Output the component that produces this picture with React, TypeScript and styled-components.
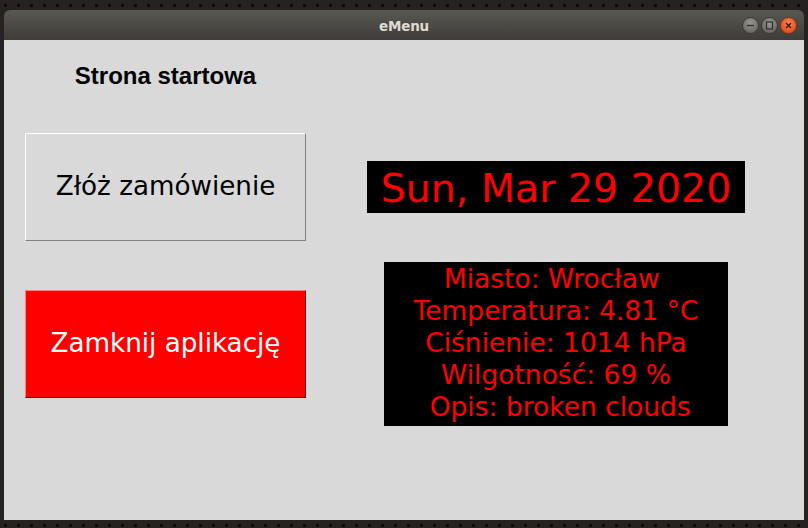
import React from "react";
import styled, { createGlobalStyle } from "styled-components";

const GlobalStyle = createGlobalStyle`
  html, body {
    margin: 0;
    padding: 0;
  }
  body {
    width: 808px;
    height: 528px;
    overflow: hidden;
    background-color: #272222;
    background-image: radial-gradient(circle, #0b0b0b 1.4px, transparent 2px);
    background-size: 13px 13px;
    background-position: -1px -1px;
  }
`;

const Desktop = styled.div`
  padding: 10px 4px 8px 4px;
  display: flex;
`;

const Window = styled.div`
  width: 800px;
  display: flex;
  flex-direction: column;
`;

const TitleBar = styled.div`
  height: 30px;
  border-radius: 6px 6px 0 0;
  background: linear-gradient(#5a5852, #3d3c38);
  display: grid;
  grid-template-columns: 1fr auto 1fr;
  align-items: center;
`;

const Title = styled.div`
  grid-column: 2;
  font-family: "DejaVu Sans", sans-serif;
  font-weight: bold;
  font-size: 13.5px;
  color: #dfdbd2;
  letter-spacing: -0.2px;
  padding-top: 1px;
`;

const Controls = styled.div`
  grid-column: 3;
  justify-self: end;
  display: flex;
  gap: 2px;
  padding-right: 7px;
`;

const CircleButton = styled.div<{ $close?: boolean }>`
  width: 17px;
  height: 17px;
  border-radius: 50%;
  box-sizing: border-box;
  border: 1px solid ${(p) => (p.$close ? "#8a3214" : "#3a3935")};
  background: ${(p) =>
    p.$close
      ? "radial-gradient(circle at 50% 35%, #f6855a, #e2541f 70%)"
      : "radial-gradient(circle at 50% 35%, #9a9892, #6b6964 75%)"};
  display: flex;
  align-items: center;
  justify-content: center;
`;

const Content = styled.div`
  height: 480px;
  background: #d9d9d9;
  display: grid;
  grid-template-columns: 21px 281px 1fr;
`;

const LeftColumn = styled.div`
  grid-column: 2;
  display: flex;
  flex-direction: column;
  padding-top: 22px;
`;

const Heading = styled.div`
  font-family: "Liberation Sans", Arial, sans-serif;
  font-weight: bold;
  font-size: 24px;
  line-height: 27px;
  color: #000;
  text-align: center;
`;

const ButtonStack = styled.div`
  margin-top: 44px;
  display: flex;
  flex-direction: column;
  gap: 49px;
`;

const TkButton = styled.div<{ $danger?: boolean }>`
  height: 108px;
  box-sizing: border-box;
  border: 1px solid;
  border-color: ${(p) =>
    p.$danger
      ? "#ff7f7f #7f0000 #7f0000 #ff7f7f"
      : "#ffffff #828282 #828282 #ffffff"};
  background: ${(p) => (p.$danger ? "#ff0000" : "#d9d9d9")};
  color: ${(p) => (p.$danger ? "#ffffff" : "#000000")};
  font-family: "DejaVu Sans", sans-serif;
  font-size: 26.2px;
  display: flex;
  align-items: center;
  justify-content: center;
  padding-bottom: 2px;
`;

const RightColumn = styled.div`
  grid-column: 3;
  display: flex;
  flex-direction: column;
  align-items: center;
  padding-top: 121px;
  padding-left: 2px;
  gap: 49px;
`;

const DateBox = styled.div`
  background: #000;
  color: #ff0000;
  font-family: "DejaVu Sans", sans-serif;
  font-size: 39.5px;
  line-height: 50px;
  height: 52px;
  box-sizing: border-box;
  padding: 2px 14px 0 14px;
  white-space: pre;
`;

const WeatherBox = styled.div`
  width: 344px;
  background: #000;
  color: #ff0000;
  font-family: "DejaVu Sans", sans-serif;
  font-size: 26.5px;
  line-height: 32px;
  padding: 1px 0 3px 0;
  text-align: center;
  white-space: pre;
`;

const weather = [
  "Miasto: Wrocław ",
  "Temperatura: 4.81 °C",
  "Ciśnienie: 1014 hPa",
  "Wilgotność: 69 %",
  " Opis: broken clouds",
];

export default function App() {
  return (
    <>
      <GlobalStyle />
      <Desktop>
        <Window>
          <TitleBar>
            <Title>eMenu</Title>
            <Controls>
              <CircleButton>
                <svg width="9" height="9" viewBox="0 0 9 9">
                  <line x1="1" y1="4.5" x2="8" y2="4.5" stroke="#2f2e2b" strokeWidth="1.3" />
                </svg>
              </CircleButton>
              <CircleButton>
                <svg width="9" height="9" viewBox="0 0 9 9">
                  <rect x="1.5" y="1" width="6" height="7" fill="none" stroke="#2f2e2b" strokeWidth="1.2" />
                </svg>
              </CircleButton>
              <CircleButton $close>
                <svg width="9" height="9" viewBox="0 0 9 9">
                  <path d="M2 2 L7 7 M7 2 L2 7" stroke="#3a1608" strokeWidth="1.3" />
                </svg>
              </CircleButton>
            </Controls>
          </TitleBar>
          <Content>
            <LeftColumn>
              <Heading>Strona startowa</Heading>
              <ButtonStack>
                <TkButton>Złóż zamówienie</TkButton>
                <TkButton $danger>Zamknij aplikację</TkButton>
              </ButtonStack>
            </LeftColumn>
            <RightColumn>
              <DateBox>Sun, Mar 29 2020</DateBox>
              <WeatherBox>
                {weather.map((line) => (
                  <div key={line}>{line}</div>
                ))}
              </WeatherBox>
            </RightColumn>
          </Content>
        </Window>
      </Desktop>
    </>
  );
}
